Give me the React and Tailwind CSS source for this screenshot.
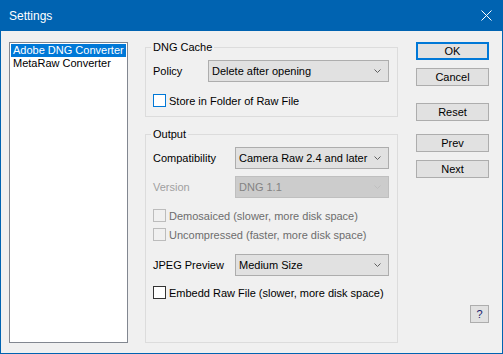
// Dropdown drawn like a classic Win10 combo box
function Combo({ value, disabled }) {
  return (
    <div
      className={`flex h-[22px] flex-1 items-center justify-between border pl-[3px] pr-[7px] ${
        disabled ? 'border-[#bfbfbf] bg-[#cccccc] text-[#838383]' : 'border-[#adadad] bg-[#e1e1e1] text-black'
      }`}
    >
      <span>{value}</span>
      <svg width="7" height="4" viewBox="0 0 7 4" fill="none">
        <path d="M0.5 0.5L3.5 3.5L6.5 0.5" stroke={disabled ? '#bfbfbf' : '#606060'} />
      </svg>
    </div>
  );
}

function Check({ label, disabled, focused, className = '' }) {
  const box = focused ? 'border-[#0078d7] bg-white' : disabled ? 'border-[#bcbcbc] bg-[#f0f0f0]' : 'border-[#333333] bg-white';
  return (
    <div className={`flex h-[13px] items-center ${className}`}>
      <div className={`h-[13px] w-[13px] shrink-0 border ${box}`} />
      <span className={`ml-[3px] whitespace-nowrap ${disabled ? 'text-[#6d6d6d]' : 'text-black'}`}>{label}</span>
    </div>
  );
}

function Btn({ children, primary, className = '' }) {
  return (
    <div
      className={`flex h-[18px] w-[73px] items-center justify-center bg-[#e1e1e1] ${
        primary ? 'border-2 border-[#0078d7]' : 'border border-[#adadad]'
      } ${className}`}
    >
      {children}
    </div>
  );
}

export default function App() {
  return (
    <div className="flex h-[354px] w-[503px] flex-col bg-[#0063b1] font-['Liberation_Sans',Arial,sans-serif] text-[11px] leading-[14px] text-black">
      {/* Title bar */}
      <div className="flex h-[31px] shrink-0 items-center justify-between pl-[9px] pr-[10px] text-[12px] text-white">
        <span>Settings</span>
        <svg width="11" height="11" viewBox="0 0 11 11" fill="none" className="mr-px">
          <path d="M0.5 0.5L10.5 10.5M10.5 0.5L0.5 10.5" stroke="white" strokeWidth="1" />
        </svg>
      </div>

      <div className="mx-px mb-px flex flex-1 bg-[#f0f0f0] pb-[10px] pl-[8px] pt-[11px]">
        {/* Converter list */}
        <div className="w-[119px] shrink-0 border border-[#828790] bg-white px-px pt-px">
          <div className="h-[13px] bg-[#0078d7] pl-[2px] leading-[13px] text-white">Adobe DNG Converter</div>
          <div className="h-[13px] pl-[2px] leading-[13px]">MetaRaw Converter</div>
        </div>

        {/* Options */}
        <div className="ml-[17px] -mt-[2px] flex w-[253px] shrink-0 flex-col">
          <fieldset className="border border-[#dcdcdc] px-[7px] pb-[9px]">
            <legend className="-ml-[2px] px-[2px]">DNG Cache</legend>
            <div className="mt-[6px] flex items-center pr-px">
              <span className="w-[55px]">Policy</span>
              <Combo value="Delete after opening" />
            </div>
            <Check label="Store in Folder of Raw File" focused className="mt-[12px]" />
          </fieldset>

          <fieldset className="mt-[10px] flex-1 border border-[#dcdcdc] px-[7px]">
            <legend className="-ml-[2px] px-[2px]">Output</legend>
            <div className="mt-[6px] flex items-center pr-px">
              <span className="w-[82px]">Compatibility</span>
              <Combo value="Camera Raw 2.4 and later" />
            </div>
            <div className="mt-[7px] flex items-center pr-px">
              <span className="w-[82px] text-[#a0a0a0]">Version</span>
              <Combo value="DNG 1.1" disabled />
            </div>
            <Check label="Demosaiced (slower, more disk space)" disabled className="mt-[11px]" />
            <Check label="Uncompressed (faster, more disk space)" disabled className="mt-[6px]" />
            <div className="mt-[13px] flex items-center pr-px">
              <span className="w-[82px]">JPEG Preview</span>
              <Combo value="Medium Size" />
            </div>
            <Check label="Embedd Raw File (slower, more disk space)" className="mt-[10px]" />
          </fieldset>
        </div>

        {/* Buttons */}
        <div className="ml-[18px] flex flex-col pb-[20px]">
          <Btn primary>OK</Btn>
          <Btn className="mt-[8px]">Cancel</Btn>
          <Btn className="mt-[17px]">Reset</Btn>
          <Btn className="mt-[13px]">Prev</Btn>
          <Btn className="mt-[8px]">Next</Btn>
          <div className="mt-auto flex h-[18px] w-[19px] items-center justify-center self-end border border-[#adadad] bg-[#e1e1e1] text-[#1a1a6e]">
            ?
          </div>
        </div>
      </div>
    </div>
  );
}
